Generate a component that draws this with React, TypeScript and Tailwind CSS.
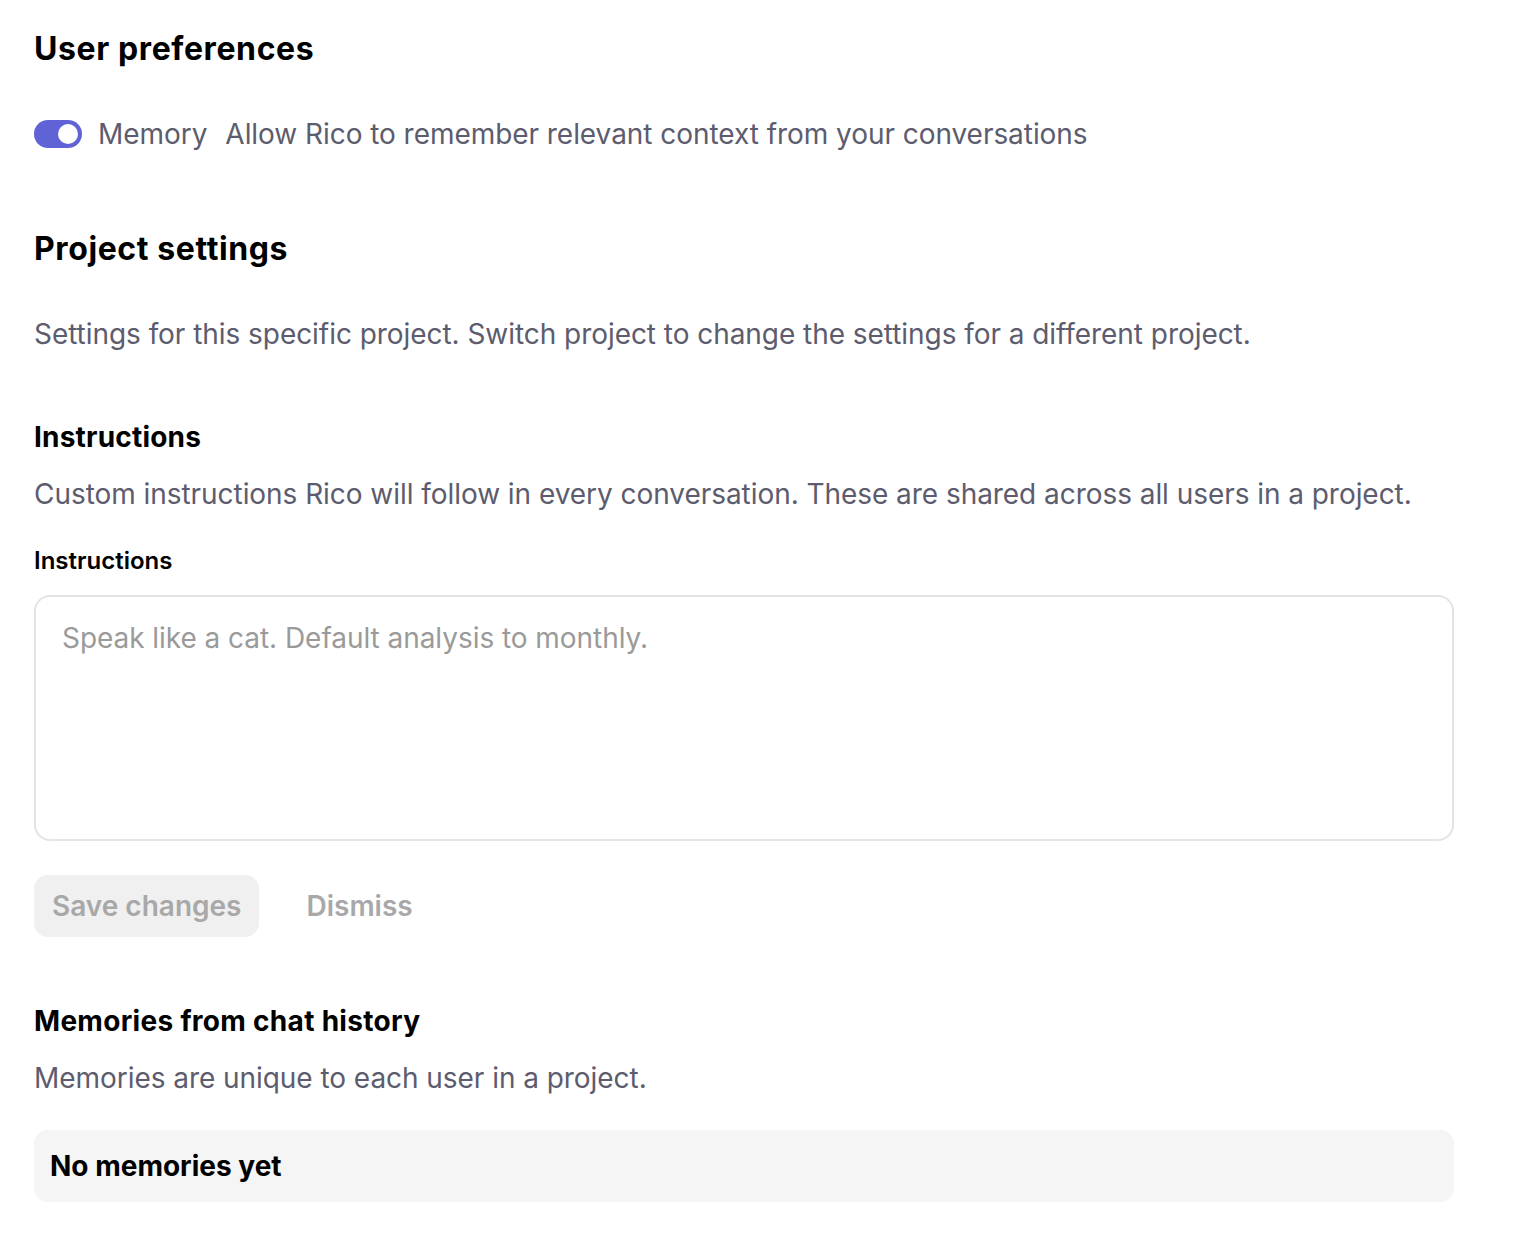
import React, { useState } from 'react';

const font = { fontFamily: 'Inter, "Noto Sans", sans-serif' };

export default function App() {
  const [memory, setMemory] = useState(true);
  const [text, setText] = useState('');

  return (
    <div className="min-h-screen bg-white text-black" style={font}>
      <div className="w-[1420px] pl-[34px] pt-[29px] pb-[40px] box-content">
        <h1 className="text-[32px] leading-[40px] font-bold tracking-[0.6px]">User preferences</h1>

        <div className="mt-[45px] flex h-[40px] items-center">
          <button
            onClick={() => setMemory(!memory)}
            className={`relative h-[28px] w-[48px] shrink-0 rounded-full ${memory ? 'bg-[#5f63d6]' : 'bg-gray-300'}`}
          >
            <span
              className={`absolute top-[4px] h-[20px] w-[20px] rounded-full bg-white ${memory ? 'left-[24px]' : 'left-[4px]'}`}
            />
          </button>
          <span className="ml-[16px] text-[28px] leading-[40px] tracking-[-0.05px] text-[#5c5c6e]">Memory</span>
          <span className="ml-[18px] text-[28px] leading-[40px] tracking-[-0.05px] text-[#5c5c6e]">
            Allow Rico to remember relevant context from your conversations
          </span>
        </div>

        <h2 className="mt-[75px] text-[32px] leading-[40px] font-bold tracking-[0.6px]">Project settings</h2>
        <p className="mt-[45px] text-[28px] leading-[40px] tracking-[-0.05px] text-[#5c5c6e]">
          Settings for this specific project. Switch project to change the settings for a different project.
        </p>

        <h3 className="mt-[63px] text-[28px] leading-[40px] font-bold tracking-[0.2px]">Instructions</h3>
        <p className="mt-[17px] text-[28px] leading-[40px] tracking-[-0.05px] text-[#5c5c6e]">
          Custom instructions Rico will follow in every conversation. These are shared across all users in a project.
        </p>

        <label className="mt-[31px] block text-[24px] leading-[32px] font-semibold">Instructions</label>
        <textarea
          value={text}
          onChange={(e) => setText(e.target.value)}
          placeholder="Speak like a cat. Default analysis to monthly."
          className="mt-[18px] block h-[246px] w-full resize-none rounded-[16px] border-2 border-[#e4e4e4] px-[26px] pt-[21px] pb-[20px] text-[28px] leading-[40px] tracking-[-0.05px] text-[#333] placeholder:text-[#9a9a9a] outline-none"
        />

        <div className="mt-[34px] flex items-center">
          <button className="h-[62px] rounded-[14px] bg-[#f0f0f0] px-[18px] text-[28px] font-semibold text-[#a8a8a8]">
            Save changes
          </button>
          <button className="ml-[47px] h-[62px] text-[28px] font-semibold text-[#a8a8a8]">Dismiss</button>
        </div>

        <h3 className="mt-[64px] text-[28px] leading-[40px] font-bold tracking-[0.3px]">Memories from chat history</h3>
        <p className="mt-[17px] text-[28px] leading-[40px] tracking-[-0.05px] text-[#5c5c6e]">
          Memories are unique to each user in a project.
        </p>

        <div className="mt-[32px] flex h-[72px] items-center rounded-[14px] bg-[#f5f5f5] px-[16px]">
          <span className="text-[28px] font-bold">No memories yet</span>
        </div>
      </div>
    </div>
  );
}
